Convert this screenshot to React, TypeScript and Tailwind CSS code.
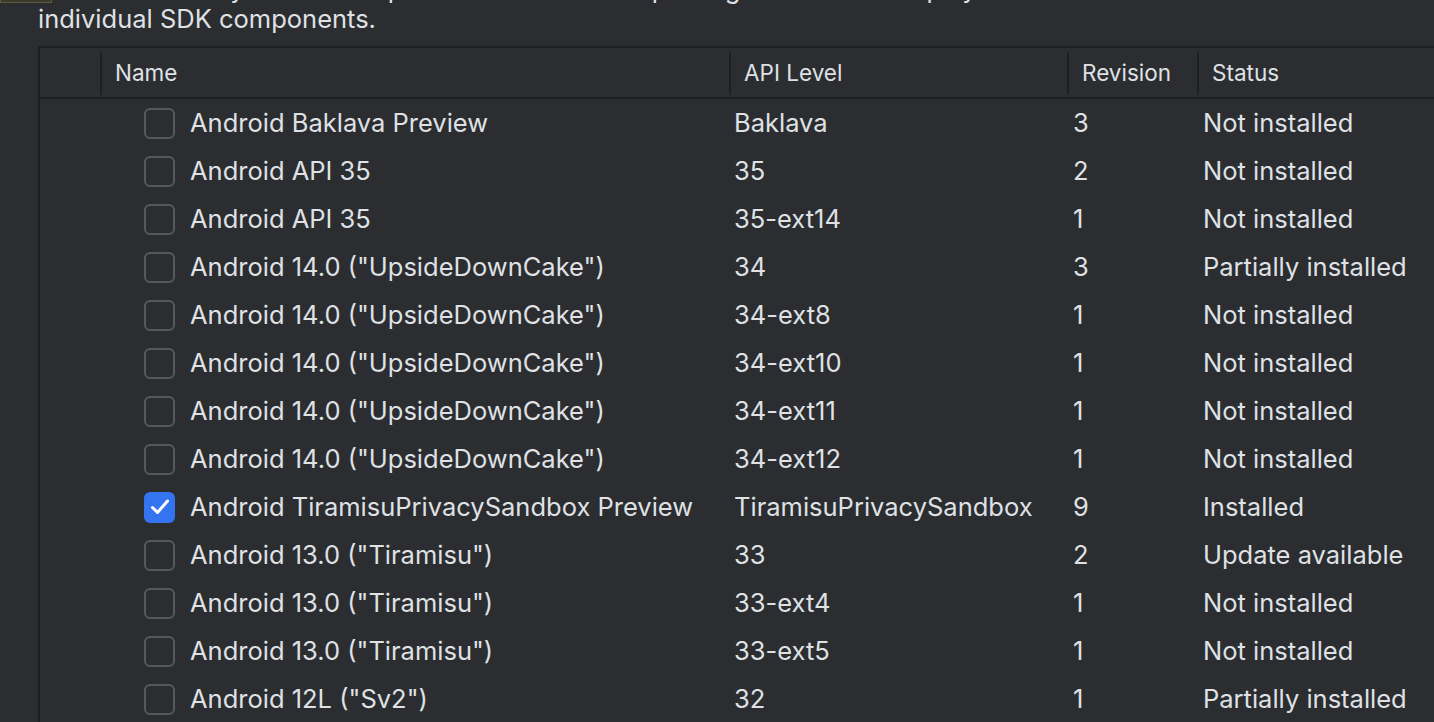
import React from 'react';

type Row = {
  name: string;
  api: string;
  rev: string;
  status: string;
  checked?: boolean;
};

const rows: Row[] = [
  { name: 'Android Baklava Preview', api: 'Baklava', rev: '3', status: 'Not installed' },
  { name: 'Android API 35', api: '35', rev: '2', status: 'Not installed' },
  { name: 'Android API 35', api: '35-ext14', rev: '1', status: 'Not installed' },
  { name: 'Android 14.0 ("UpsideDownCake")', api: '34', rev: '3', status: 'Partially installed' },
  { name: 'Android 14.0 ("UpsideDownCake")', api: '34-ext8', rev: '1', status: 'Not installed' },
  { name: 'Android 14.0 ("UpsideDownCake")', api: '34-ext10', rev: '1', status: 'Not installed' },
  { name: 'Android 14.0 ("UpsideDownCake")', api: '34-ext11', rev: '1', status: 'Not installed' },
  { name: 'Android 14.0 ("UpsideDownCake")', api: '34-ext12', rev: '1', status: 'Not installed' },
  { name: 'Android TiramisuPrivacySandbox Preview', api: 'TiramisuPrivacySandbox', rev: '9', status: 'Installed', checked: true },
  { name: 'Android 13.0 ("Tiramisu")', api: '33', rev: '2', status: 'Update available' },
  { name: 'Android 13.0 ("Tiramisu")', api: '33-ext4', rev: '1', status: 'Not installed' },
  { name: 'Android 13.0 ("Tiramisu")', api: '33-ext5', rev: '1', status: 'Not installed' },
  { name: 'Android 12L ("Sv2")', api: '32', rev: '1', status: 'Partially installed' },
];

const cols = 'grid grid-cols-[60px_629px_338px_130px_1fr]';

function Checkbox({ checked }: { checked?: boolean }) {
  if (checked) {
    return (
      <div className="w-[31px] h-[31px] rounded-[6px] bg-[#3574f0] flex items-center justify-center">
        <svg width="24" height="24" viewBox="0 0 24 24" fill="none">
          <path d="M4.5 12.5l5 5L19.5 6" stroke="white" strokeWidth="3" strokeLinecap="round" strokeLinejoin="round" />
        </svg>
      </div>
    );
  }
  return <div className="w-[31px] h-[31px] rounded-[6px] border-2 border-[#56585d]" />;
}

function HeaderCell({ label, sep = true }: { label?: string; sep?: boolean }) {
  return (
    <div className="flex items-center h-full">
      {sep && <div className="w-[2px] h-[43px] bg-[#1e1f22]" />}
      {label && <span className="pl-[13px]">{label}</span>}
    </div>
  );
}

export default function App() {
  return (
    <div
      className="w-[1434px] h-[722px] overflow-hidden bg-[#2b2d30] text-[#dfe1e5] relative"
      style={{ fontFamily: 'Inter, "Open Sans", sans-serif' }}
    >
      <div className="absolute left-0 top-[-20px] w-[52px] h-[23px] bg-[#3b3a2c] border border-[#5e5c3f]" />

      <div className="pl-[38px] text-[25.5px] leading-[30px] whitespace-nowrap mt-[-26px] h-[72px]">
        <div>will automatically check for updates. Check "show package details" to display</div>
        <div>individual SDK components.</div>
      </div>

      <div className="ml-[38px] border-t-2 border-l-2 border-[#1e1f22]">
        <div className={`${cols} h-[51px] pt-[1px] text-[22.5px] border-b-2 border-[#1e1f22]`}>
          <div />
          <HeaderCell label="Name" />
          <HeaderCell label="API Level" />
          <HeaderCell label="Revision" />
          <HeaderCell label="Status" />
        </div>
        {rows.map((r, i) => (
          <div key={i} className={`${cols} h-[48px] items-center text-[25.5px]`}>
            <div />
            <div className="flex items-center gap-[15px] pl-[44px] whitespace-nowrap">
              <Checkbox checked={r.checked} />
              <span>{r.name}</span>
            </div>
            <div className="pl-[5px] whitespace-nowrap">{r.api}</div>
            <div className="pl-[6px]">{r.rev}</div>
            <div className="pl-[6px] whitespace-nowrap">{r.status}</div>
          </div>
        ))}
      </div>
    </div>
  );
}
